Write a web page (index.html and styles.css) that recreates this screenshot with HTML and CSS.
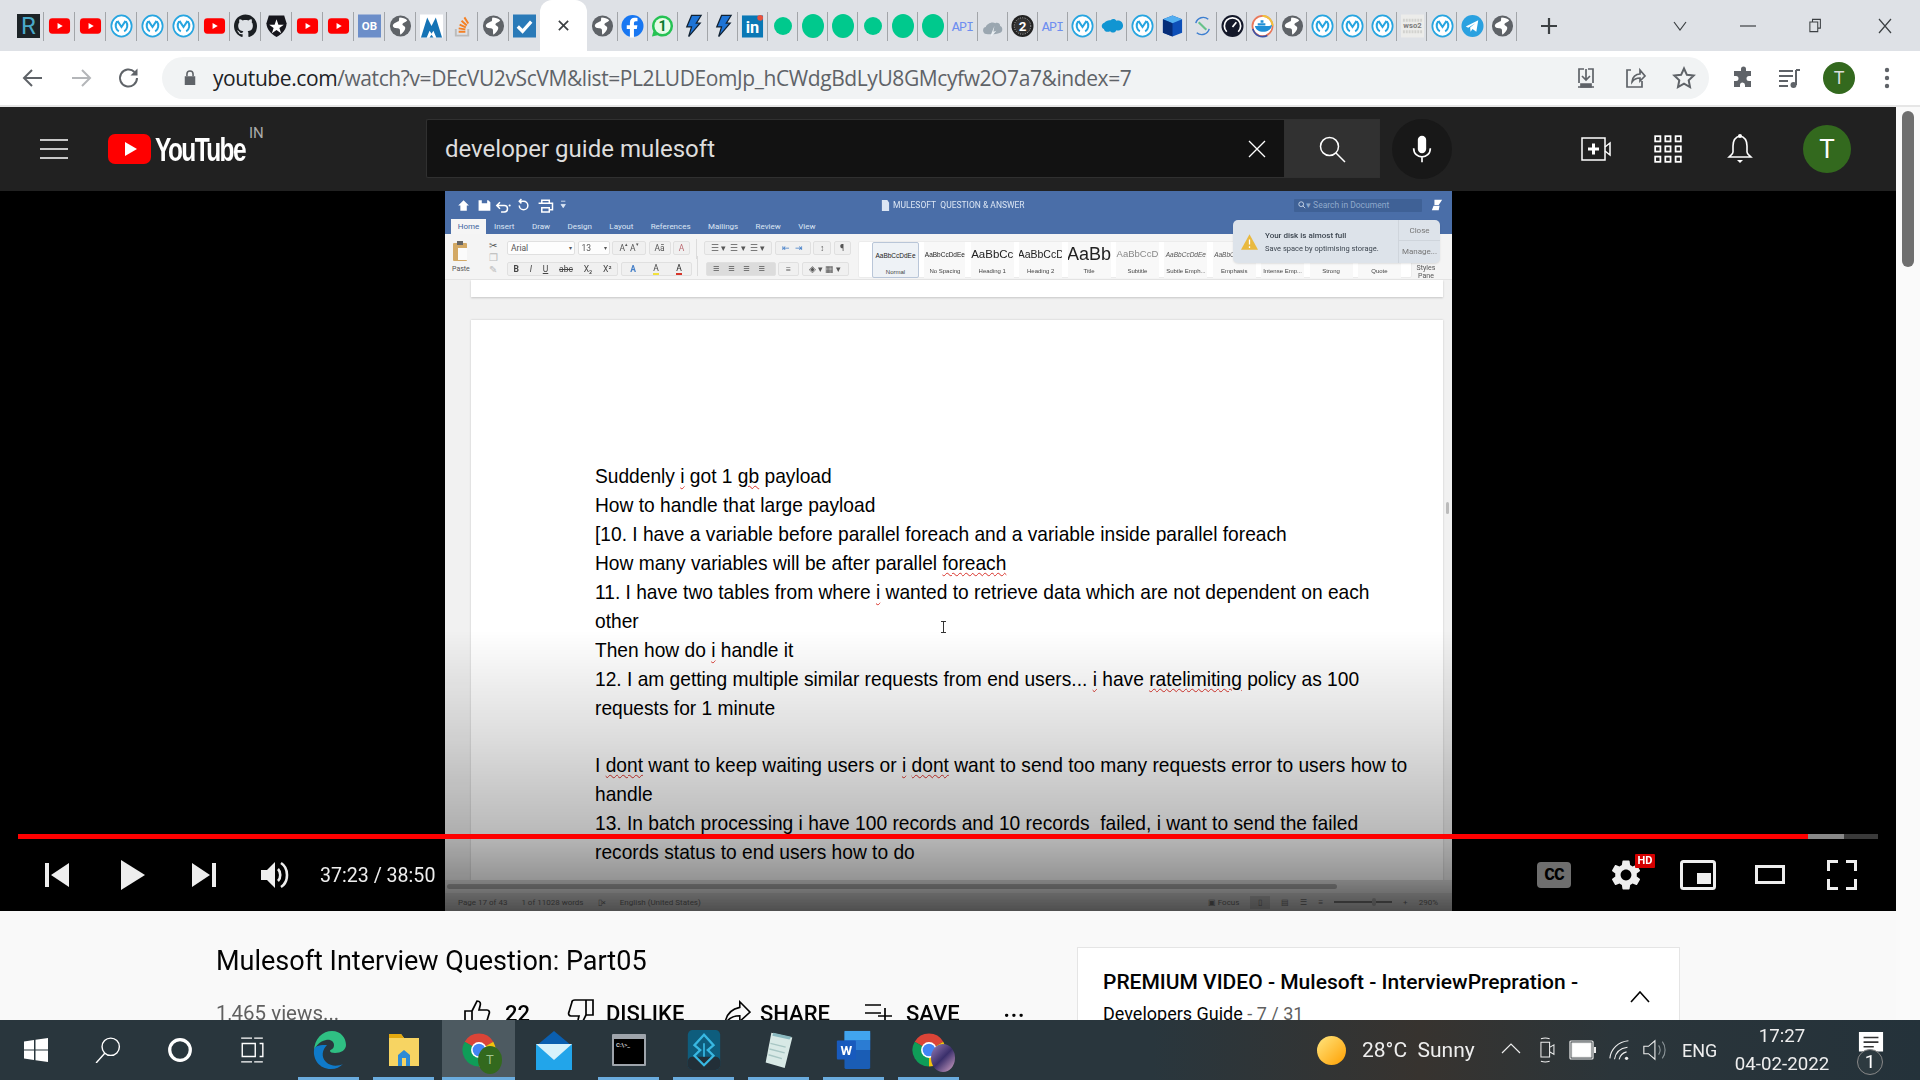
FILE: index.html
```html
<!DOCTYPE html>
<html lang="en">
<head>
<meta charset="utf-8">
<title>Mulesoft Interview Question: Part05 - YouTube</title>
<link rel="stylesheet" href="styles.css">
</head>
<body>
<svg class="defs" aria-hidden="true">
  <symbol id="yt" viewBox="0 0 24 24"><rect x="1" y="4" width="22" height="16" rx="3.5" fill="#f00"/><path d="M10 8.8l5.4 3.2-5.4 3.2z" fill="#fff"/></symbol>
  <symbol id="mule" viewBox="0 0 24 24"><ellipse cx="12" cy="12" rx="10.6" ry="11" fill="#fff" stroke="#27a5e0" stroke-width="1.8"/><path d="M7.4 7.2c-2.6 3.4-1.6 8.4 1.8 10.4M16.6 7.2c2.6 3.4 1.6 8.4-1.8 10.4M7.8 6.6l4.2 6.4 4.2-6.4" fill="none" stroke="#27a5e0" stroke-width="2.1"/></symbol>
  <symbol id="gh" viewBox="0 0 16 16"><path fill="#1b1f23" d="M8 0C3.58 0 0 3.58 0 8c0 3.54 2.29 6.53 5.47 7.59.4.07.55-.17.55-.38 0-.19-.01-.82-.01-1.49-2.01.37-2.53-.49-2.69-.94-.09-.23-.48-.94-.82-1.13-.28-.15-.68-.52-.01-.53.63-.01 1.08.58 1.23.82.72 1.21 1.87.87 2.33.66.07-.52.28-.87.51-1.07-1.78-.2-3.64-.89-3.64-3.95 0-.87.31-1.59.82-2.15-.08-.2-.36-1.02.08-2.12 0 0 .67-.21 2.2.82.64-.18 1.32-.27 2-.27.68 0 1.36.09 2 .27 1.53-1.04 2.2-.82 2.2-.82.44 1.1.16 1.92.08 2.12.51.56.82 1.27.82 2.15 0 3.07-1.87 3.75-3.65 3.95.29.25.54.73.54 1.48 0 1.07-.01 1.93-.01 2.2 0 .21.15.46.55.38A8.013 8.013 0 0016 8c0-4.42-3.58-8-8-8z"/></symbol>
  <symbol id="auth" viewBox="0 0 24 24"><path d="M4 1h16l2.500 8c0 6-4 11-10.500 14.500C6 20 1.500 15 1.500 9z" fill="#16161c"/><path d="M12 5l2 5.600h5.600l-4.600 3.400 1.800 5.600L12 16.200l-4.800 3.400 1.800-5.600-4.600-3.400H10z" fill="#fff"/></symbol>
  <symbol id="globe" viewBox="0 0 24 24"><circle cx="12" cy="12" r="11" fill="#5f6368"/><path d="M11 3c3 0 6 1 8 3-1 2-4 2-5 4 0 2 3 2 3 4s-2 5-5 7c-1-2 0-5-1-6-2-1-6 0-7-3 0-3 4-4 6-5 1-1 0-3 1-4z" fill="#fff"/></symbol>
  <symbol id="ob" viewBox="0 0 24 24"><rect width="24" height="24" fill="#6c8ec9"/><text x="12" y="16.500" text-anchor="middle" class="fav-text" font-size="12" fill="#fff">OB</text></symbol>
  <symbol id="peak" viewBox="0 0 24 24"><rect width="24" height="24" fill="#fff"/><path d="M1 24L7.500 3 12 12l4.500-9L23 24h-6l-3-7-2 3-2-3-3 7z" fill="#1573b5"/><path d="M10 24l2-3 2 3z" fill="#1573b5"/></symbol>
  <symbol id="so" viewBox="0 0 24 24"><path d="M5 15v7h13v-7" fill="none" stroke="#bbb" stroke-width="2"/><path d="M8 18h7M8 14.500l7 1M9 10.500l6.500 3M11 6.500l5.500 5M14 3l4 6.500" fill="none" stroke="#f48024" stroke-width="2"/></symbol>
  <symbol id="chk" viewBox="0 0 24 24"><rect width="24" height="24" fill="#2a7ab8"/><path d="M5 12.500l5 5 9-10" fill="none" stroke="#fff" stroke-width="3.400"/></symbol>
  <symbol id="fb" viewBox="0 0 24 24"><circle cx="12" cy="12" r="11.500" fill="#1877f2"/><path d="M13.500 24v-9h3l.6-3.800h-3.600V9c0-1 .5-2 2-2h1.700V3.600c-1-.1-2-.3-3-.3-3 0-4.900 1.800-4.900 5.100v2.800H6v3.800h3.300v9z" fill="#fff"/></symbol>
  <symbol id="wa" viewBox="0 0 24 24"><path d="M12 1a11 11 0 0 1 0 22c-2 0-3.700-.5-5.200-1.300L1 23l1.500-5.500A11 11 0 0 1 12 1z" fill="#25c253"/><circle cx="12" cy="12" r="8.400" fill="#e7fbe9"/><text x="12" y="17.500" text-anchor="middle" class="fav-text" font-size="15" fill="#0b7a2d">1</text></symbol>
  <symbol id="bolt" viewBox="0 0 24 24"><path d="M11 1h10l-5 8h4L8 23l3-10H6z" fill="#1e74d6" stroke="#123" stroke-width="1.300"/></symbol>
  <symbol id="li" viewBox="0 0 24 24"><rect x="1" y="1" width="22" height="23" fill="#0a78b5"/><text x="12" y="19" text-anchor="middle" class="fav-text" font-size="17" fill="#fff">in</text><circle cx="20" cy="3.500" r="3" fill="#e8523f"/></symbol>
  <symbol id="api" viewBox="0 0 24 24"><text x="12" y="17.500" text-anchor="middle" class="fav-api" font-size="14" fill="#6f8ff0">API</text></symbol>
  <symbol id="cld" viewBox="0 0 24 24"><path d="M4 20c-3-2-2-7 1-7 1-3 6-6 10-4 2-1 5 0 5 3 3 1 3 6 0 7-5 2-11 2-16 1z" fill="#9aa6b0"/><path d="M10 22l4-10-1 6 3-1-5 6z" fill="#e9eef2"/></symbol>
  <symbol id="two" viewBox="0 0 24 24"><circle cx="12" cy="12" r="11.500" fill="#222"/><circle cx="12" cy="12" r="8.600" fill="#333" stroke="#bbb" stroke-dasharray="1 1.500" stroke-width="1"/><text x="12" y="17" text-anchor="middle" class="fav-text" font-size="14" fill="#fff">2</text></symbol>
  <symbol id="sf" viewBox="0 0 24 24"><path d="M10 4c2-2 5-1.500 6 .5 3-1 7 1 7 5 0 4-4 6-7 5-1 3-5 3-6.500 1-3 1.500-6 0-6.500-2.500C0 12 0 7.500 3.500 6.500 5 4.500 8 3.500 10 4z" fill="#1195d2" transform="translate(0 2)"/></symbol>
  <symbol id="box" viewBox="0 0 24 24"><path d="M12 1l10 4v14l-10 4-10-4V5z" fill="#0d4fb8"/><path d="M12 1l10 4-10 4L2 5z" fill="#52aef0"/><path d="M12 9v14L2 19V5z" fill="#062d78"/></symbol>
  <symbol id="scv" viewBox="0 0 24 24"><path d="M18 5A8 8 0 0 0 5 9" fill="none" stroke="#3d7fd0" stroke-width="1.500"/><path d="M6 19A8 8 0 0 0 19 15" fill="none" stroke="#3d7fd0" stroke-width="1.500"/><path d="M8 8l8 8" stroke="#66c28a" stroke-width="2.200"/></symbol>
  <symbol id="gauge" viewBox="0 0 24 24"><circle cx="12" cy="12" r="11.500" fill="#141829"/><path d="M6 18a8.500 8.500 0 1 1 12 0" fill="none" stroke="#fff" stroke-width="1.800"/><path d="M12 13l4-5" stroke="#fff" stroke-width="1.800"/></symbol>
  <symbol id="dock" viewBox="0 0 24 24"><circle cx="12" cy="12" r="10.500" fill="#fff" stroke="#e9785b" stroke-width="1.800"/><path d="M12 1.500a10.500 10.500 0 0 1 10.500 10.500" fill="none" stroke="#f0c43c" stroke-width="1.800"/><path d="M2 15a10.500 10.500 0 0 0 15 7" fill="none" stroke="#3a52a8" stroke-width="1.800"/><path d="M4 12h15c1 0 2-1 3-1-1 5-5 7-9 7-5 0-8-2-9-6z" fill="#1f8fd6"/><path d="M7 9h8v2.500H7zM10 6h3v2.500h-3z" fill="#1f8fd6"/></symbol>
  <symbol id="wso" viewBox="0 0 24 24"><rect width="24" height="24" fill="#ececea"/><path d="M2 6h20M2 18h20" stroke="#d2d2cf" stroke-width="3" stroke-dasharray="2 1"/><text x="12" y="14.500" text-anchor="middle" class="fav-text" font-size="8" fill="#7b7b7b">wso2</text></symbol>
  <symbol id="tg" viewBox="0 0 24 24"><circle cx="12" cy="12" r="11.500" fill="#2aa1e0"/><path d="M5 12.500L18 6l-2 12-4-3-2 3-.5-4.500L15 9l-7.500 4.800z" fill="#fff"/></symbol>
  <symbol id="chrome" viewBox="0 0 24 24"><path d="M12 12L2.470 6.500A11 11 0 0 1 21.530 6.500z" fill="#db4437"/><path d="M12 12l9.530-5.500A11 11 0 0 1 12 23z" fill="#f4c20d"/><path d="M12 12v11A11 11 0 0 1 2.470 6.500z" fill="#0f9d58"/><circle cx="12" cy="12" r="5.300" fill="#fff"/><circle cx="12" cy="12" r="4.200" fill="#4285f4"/></symbol>
</svg>

<header class="tabstrip">
  <div class="tabs">
    <span class="tab"><span class="fav-r">R</span></span>
    <span class="tab"><svg class="fav"><use href="#yt"/></svg></span>
    <span class="tab"><svg class="fav"><use href="#yt"/></svg></span>
    <span class="tab"><svg class="fav"><use href="#mule"/></svg></span>
    <span class="tab"><svg class="fav"><use href="#mule"/></svg></span>
    <span class="tab"><svg class="fav"><use href="#mule"/></svg></span>
    <span class="tab"><svg class="fav"><use href="#yt"/></svg></span>
    <span class="tab"><svg class="fav"><use href="#gh"/></svg></span>
    <span class="tab"><svg class="fav"><use href="#auth"/></svg></span>
    <span class="tab"><svg class="fav"><use href="#yt"/></svg></span>
    <span class="tab"><svg class="fav"><use href="#yt"/></svg></span>
    <span class="tab"><svg class="fav"><use href="#ob"/></svg></span>
    <span class="tab"><svg class="fav"><use href="#globe"/></svg></span>
    <span class="tab"><svg class="fav"><use href="#peak"/></svg></span>
    <span class="tab"><svg class="fav"><use href="#so"/></svg></span>
    <span class="tab"><svg class="fav"><use href="#globe"/></svg></span>
    <span class="tab tab-last"><svg class="fav"><use href="#chk"/></svg></span>
  </div>
  <div class="tab-active"><svg class="tab-x" viewBox="0 0 14 14"><path d="M2 2l10 10M12 2L2 12"/></svg></div>
  <div class="tabs tabs-b">
    <span class="tab"><svg class="fav"><use href="#globe"/></svg></span>
    <span class="tab"><svg class="fav"><use href="#fb"/></svg></span>
    <span class="tab"><svg class="fav"><use href="#wa"/></svg></span>
    <span class="tab"><svg class="fav"><use href="#bolt"/></svg></span>
    <span class="tab"><svg class="fav"><use href="#bolt"/></svg></span>
    <span class="tab"><svg class="fav"><use href="#li"/></svg></span>
    <span class="tab"><b class="dot dot-s"></b></span>
    <span class="tab"><b class="dot"></b></span>
    <span class="tab"><b class="dot"></b></span>
    <span class="tab"><b class="dot dot-s"></b></span>
    <span class="tab"><b class="dot"></b></span>
    <span class="tab"><b class="dot"></b></span>
    <span class="tab"><svg class="fav"><use href="#api"/></svg></span>
    <span class="tab"><svg class="fav"><use href="#cld"/></svg></span>
    <span class="tab"><svg class="fav"><use href="#two"/></svg></span>
    <span class="tab"><svg class="fav"><use href="#api"/></svg></span>
    <span class="tab"><svg class="fav"><use href="#mule"/></svg></span>
    <span class="tab"><svg class="fav"><use href="#sf"/></svg></span>
    <span class="tab"><svg class="fav"><use href="#mule"/></svg></span>
    <span class="tab"><svg class="fav"><use href="#box"/></svg></span>
    <span class="tab"><svg class="fav"><use href="#scv"/></svg></span>
    <span class="tab"><svg class="fav"><use href="#gauge"/></svg></span>
    <span class="tab"><svg class="fav"><use href="#dock"/></svg></span>
    <span class="tab"><svg class="fav"><use href="#globe"/></svg></span>
    <span class="tab"><svg class="fav"><use href="#mule"/></svg></span>
    <span class="tab"><svg class="fav"><use href="#mule"/></svg></span>
    <span class="tab"><svg class="fav"><use href="#mule"/></svg></span>
    <span class="tab"><svg class="fav"><use href="#wso"/></svg></span>
    <span class="tab"><svg class="fav"><use href="#mule"/></svg></span>
    <span class="tab"><svg class="fav"><use href="#tg"/></svg></span>
    <span class="tab"><svg class="fav"><use href="#globe"/></svg></span>
  </div>
  <svg class="new-tab" viewBox="0 0 18 18"><path d="M9 1v16M1 9h16"/></svg>
  <div class="win-ctrl">
    <svg class="wc wc-chev" viewBox="0 0 16 12"><path d="M2 2l6 8 6-8"/></svg>
    <svg class="wc wc-min" viewBox="0 0 16 12"><path d="M0 6h16"/></svg>
    <svg class="wc wc-max" viewBox="0 0 16 16"><path d="M4 4V1h9v10h-3M1 4h9v11H1z"/></svg>
    <svg class="wc wc-x" viewBox="0 0 16 16"><path d="M2 1l12 14M14 1L2 15"/></svg>
  </div>
</header>

<nav class="addrbar">
  <svg class="nav-ic ic-back" viewBox="0 0 24 24"><path d="M21 12H4M11 4l-8 8 8 8"/></svg>
  <svg class="nav-ic ic-fwd" viewBox="0 0 24 24"><path d="M3 12h17M13 4l8 8-8 8"/></svg>
  <svg class="nav-ic ic-rel" viewBox="0 0 24 24"><path d="M20 12a8.500 8.500 0 1 1-2.500-6"/><path class="solid" d="M20.500 2.500v7h-7z"/></svg>
  <div class="omni">
    <svg class="lock" viewBox="0 0 16 20"><path d="M2 8h12v10H2z" fill="#5f6368"/><path d="M4.500 8V5.500a3.500 3.500 0 0 1 7 0V8" fill="none" stroke="#5f6368" stroke-width="1.800"/></svg>
    <span class="url"><span class="url-host">youtube.com</span>/watch?v=DEcVU2vScVM&amp;list=PL2LUDEomJp_hCWdgBdLyU8GMcyfw2O7a7&amp;index=7</span>
    <span class="omni-icons">
      <svg class="om-ic" viewBox="0 0 24 24"><path d="M5 17V3h5M19 17V3h-5M12 3v11M8 10l4 4 4-4M4 21h16" /><path d="M7 18h10v3H7z" fill="#5f6368"/></svg>
      <svg class="om-ic" viewBox="0 0 24 24"><path d="M8 4H4v17h15v-6M9 16c0-5 4-8 8-8V4l5 6-5 5v-3c-3 0-6 1-8 4z"/></svg>
      <svg class="om-ic" viewBox="0 0 24 24"><path d="M12 2.500l2.900 6.300 6.800.8-5 4.700 1.300 6.800L12 17.700 6 21.100l1.300-6.800-5-4.700 6.800-.8z" stroke-width="2"/></svg>
    </span>
  </div>
  <svg class="tb-ic tb-puzzle" viewBox="0 0 24 24"><path d="M10 3a2.500 2.500 0 0 1 5 0v2h5v5h-2a2.500 2.500 0 0 0 0 5h2v6h-6v-2a2.500 2.500 0 0 0-5 0v2H3v-6h2a2.500 2.500 0 0 0 0-5H3V5h7z" fill="#5f6368"/></svg>
  <svg class="tb-ic tb-queue" viewBox="0 0 24 24"><path d="M2 5h14M2 10h14M2 15h9M2 20h9M19 4v15" stroke="#5f6368" stroke-width="2" fill="none"/><circle cx="16.500" cy="19" r="3" fill="#5f6368"/><path d="M19 4h4" stroke="#5f6368" stroke-width="2"/></svg>
  <span class="tb-avatar">T</span>
  <svg class="tb-ic tb-dots" viewBox="0 0 6 24"><circle cx="3" cy="4" r="2.200" fill="#5f6368"/><circle cx="3" cy="12" r="2.200" fill="#5f6368"/><circle cx="3" cy="20" r="2.200" fill="#5f6368"/></svg>
</nav>

<div class="page">
  <main class="main">
    <div class="yt-header">
      <svg class="burger" viewBox="0 0 28 20"><path d="M0 1h28M0 10h28M0 19h28"/></svg>
      <div class="logo">
        <svg class="logo-play" viewBox="0 0 43 30"><rect width="43" height="30" rx="7" fill="#f00"/><path d="M17 8l12 7-12 7z" fill="#fff"/></svg>
        <span class="logo-word">YouTube</span>
        <span class="logo-in">IN</span>
      </div>
      <div class="search">
        <span class="search-text">developer guide mulesoft</span>
        <svg class="search-x" viewBox="0 0 18 18"><path d="M1 1l16 16M17 1L1 17"/></svg>
      </div>
      <div class="search-btn"><svg viewBox="0 0 28 28"><circle cx="11.500" cy="11.500" r="9"/><path d="M18 18l9 9"/></svg></div>
      <div class="mic"><svg viewBox="0 0 24 34"><rect x="7" y="1" width="10" height="21" rx="5" fill="#fff"/><path d="M2 16c0 14 20 14 20 0M12 26v7" fill="none" stroke="#fff" stroke-width="2"/></svg></div>
      <div class="yt-right">
        <span class="yt-slot"><svg class="yt-ic" viewBox="0 0 30 28"><rect x="1" y="3" width="23" height="22" fill="none" stroke="#fff" stroke-width="1.500"/><path d="M12.500 8.500v11M7 14h11" stroke="#fff" stroke-width="3"/><path d="M24 12l5-4v12l-5-4" fill="none" stroke="#fff" stroke-width="1.500"/></svg></span>
        <span class="yt-slot"><svg class="yt-ic" viewBox="0 0 24 24"><g fill="none" stroke="#fff" stroke-width="1.500"><rect x="1" y="1" width="4.500" height="4.500"/><rect x="9.700" y="1" width="4.500" height="4.500"/><rect x="18.500" y="1" width="4.500" height="4.500"/><rect x="1" y="9.700" width="4.500" height="4.500"/><rect x="9.700" y="9.700" width="4.500" height="4.500"/><rect x="18.500" y="9.700" width="4.500" height="4.500"/><rect x="1" y="18.500" width="4.500" height="4.500"/><rect x="9.700" y="18.500" width="4.500" height="4.500"/><rect x="18.500" y="18.500" width="4.500" height="4.500"/></g></svg></span>
        <span class="yt-slot"><svg class="yt-ic yt-bell" viewBox="0 0 24 32"><path d="M12 3c-5 1-7 5-7 10v6c0 2-2 3-4 5h22c-2-2-4-3-4-5v-6c0-5-2-9-7-10z" fill="none" stroke="#fff" stroke-width="1.600"/><circle cx="12" cy="3" r="2" fill="#fff"/><path d="M9 27h6l-3 3z" fill="#fff"/></svg></span>
        <span class="yt-avatar">T</span>
      </div>
    </div>

    <section class="video">
      <div class="word">
        <div class="w-title">
          <svg class="w-q" viewBox="0 0 110 14"><path d="M2 7l5-5 5 5h-2v5H4V7zM21 2h9l2 2v8H21zM24 2v3h5V2zM24 8h6v4h-6z" fill="#fff"/><path d="M41 4l-3 3 3 3M38 7h7a3 3 0 0 1 0 6h-3M59 7a4 4 0 1 0 4-4h-4M61 1l-2 2 2 2M80 5v-3h7v3M77 5h13v6h-3M80 9h7v4h-7z" fill="none" stroke="#fff" stroke-width="1.400"/><circle cx="50" cy="7" r="1" fill="#fff"/><path d="M98 6h4l-2 3zM98 3h4" stroke="#dce6f4" fill="#dce6f4" stroke-width=".8"/></svg>
          <span class="w-doc"><svg viewBox="0 0 10 12"><path d="M1 0h6l2 3v9H1z" fill="#dce6f4"/></svg>MULESOFT&nbsp; QUESTION &amp; ANSWER</span>
          <span class="w-search"><svg viewBox="0 0 10 10"><circle cx="4" cy="4" r="3" fill="none" stroke="#dce6f4"/><path d="M6 6l3 3" stroke="#dce6f4"/></svg>▾ Search in Document</span>
          <svg class="w-user" viewBox="0 0 14 14"><path d="M4 1h9L9 7H4zM1 13l2-5h7l-1 5z" fill="#fff"/></svg>
        </div>
        <div class="w-tabs">
          <span class="w-tab w-tab-on">Home</span><span class="w-tab">Insert</span><span class="w-tab">Draw</span><span class="w-tab">Design</span><span class="w-tab">Layout</span><span class="w-tab">References</span><span class="w-tab">Mailings</span><span class="w-tab">Review</span><span class="w-tab">View</span>
        </div>
        <div class="w-ribbon">
          <div class="paste">
            <div class="paste-main"><svg viewBox="0 0 16 22"><rect x="1" y="3" width="14" height="18" rx="1" fill="#d3a965"/><rect x="5" y="1" width="6" height="4" fill="#666"/><rect x="6" y="8" width="9" height="12" fill="#fbfbfb"/></svg><span>Paste</span></div>
            <div class="paste-side"><span class="ps-ic">✂</span><span class="ps-ic ps-dim">❐</span><span class="ps-ic ps-dim">✎</span></div>
          </div>
          <div class="rows">
            <div class="row">
              <span class="rb rb-font">Arial<i>▾</i></span>
              <span class="rb rb-size">13<i>▾</i></span>
              <span class="rb rb-g w34">A<sup>▴</sup>&nbsp;A<sup>▾</sup></span>
              <span class="rb rb-g w22">Aā</span>
              <span class="rb rb-g w17 clr">A</span>
              <span class="rsep"></span>
              <span class="rb rb-g w68">☰ ▾&nbsp; ☰ ▾&nbsp; ☰ ▾</span>
              <span class="rb rb-g w36 blue">⇤&nbsp; ⇥</span>
              <span class="rb rb-g w18">↕</span>
              <span class="rb rb-g w17">¶</span>
            </div>
            <div class="row">
              <span class="rb rb-g w111 fmt"><b>B</b><em>I</em><u>U</u><s>abc</s><span>X₂</span><span>X²</span></span>
              <span class="rb rb-g w71 fmt"><span class="fx">A</span><span class="hl">A</span><span class="rd">A</span></span>
              <span class="rsep"></span>
              <span class="rb rb-g w70 alignb">≡ ≡ ≡ ≡</span>
              <span class="rb rb-g w21">≡</span>
              <span class="rb rb-g w47">◈ ▾ ▦ ▾</span>
            </div>
          </div>
          <div class="gallery">
            <span class="sty sty-on"><span class="sm">AaBbCcDdEe</span><em>Normal</em></span>
            <span class="sty w41"><span class="sm">AaBbCcDdEe</span><em>No Spacing</em></span>
            <span class="sty"><span class="h1s">AaBbCc</span><em>Heading 1</em></span>
            <span class="sty"><span class="h2s">AaBbCcD</span><em>Heading 2</em></span>
            <span class="sty"><span class="tts">AaBb</span><em>Title</em></span>
            <span class="sty"><span class="sbs">AaBbCcD</span><em>Subtitle</em></span>
            <span class="sty"><span class="sm it">AaBbCcDdEe</span><em>Subtle Emph...</em></span>
            <span class="sty"><span class="sm it">AaBbCcDdEe</span><em>Emphasis</em></span>
            <span class="sty"><span class="sm it">AaBbCcDdEe</span><em>Intense Emp...</em></span>
            <span class="sty"><span class="sm">AaBbCcDdEe</span><em>Strong</em></span>
            <span class="sty"><span class="sm it">AaBbCcDdEe</span><em>Quote</em></span>
            <span class="pane">Styles<br>Pane</span>
          </div>
        </div>
        <div class="notice">
          <svg viewBox="0 0 20 18"><path d="M10 0l10 18H0z" fill="#e9b93f"/><path d="M10 6v6M10 14v2" stroke="#fff" stroke-width="1.500"/></svg>
          <div class="notice-txt"><b>Your disk is almost full</b><span>Save space by optimising storage.</span></div>
          <div class="notice-act"><span>Close</span><span>Manage...</span></div>
        </div>
        <div class="w-doc-area">
          <div class="page-prev"></div>
          <div class="page-cur">
            <p>Suddenly <span class="sp">i</span> got 1 <span class="sp">gb</span> payload</p>
            <p>How to handle that large payload</p>
            <p>[10. I have a variable before parallel foreach and a variable inside parallel foreach</p>
            <p>How many variables will be after parallel <span class="sp">foreach</span></p>
            <p>11. I have two tables from where <span class="sp">i</span> wanted to retrieve data which are not dependent on each</p>
            <p>other</p>
            <p>Then how do <span class="sp">i</span> handle it</p>
            <p>12. I am getting multiple similar requests from end users... <span class="sp">i</span> have <span class="sp">ratelimiting</span> policy as 100</p>
            <p>requests for 1 minute</p>
            <p>&nbsp;</p>
            <p>I <span class="sp">dont</span> want to keep waiting users or <span class="sp">i</span> <span class="sp">dont</span> want to send too many requests error to users how to</p>
            <p>handle</p>
            <p>13. In batch processing i have 100 records and 10 records&nbsp; failed, i want to send the failed</p>
            <p>records status to end users how to do</p>
            <svg class="ibeam" viewBox="0 0 7 12"><path d="M1 .5h5M3.500.5v11M1 11.500h5" stroke="#333" fill="none"/></svg>
          </div>
          <span class="w-vthumb"></span>
        </div>
        <div class="w-hscroll"><span></span></div>
        <div class="w-status">
          <span>Page 17 of 43</span><span>1 of 11028 words</span><span class="st-book">▯×</span><span>English (United States)</span>
          <span class="st-right"><span>▣ Focus</span><span class="st-view">▯</span><span>▤</span><span>☰</span><span>≡</span><span class="st-zoom"><i></i></span><span>+</span><span>290%</span></span>
        </div>
      </div>
      <div class="scrim"></div>
      <div class="progress"><span class="p-buf"></span><span class="p-play"></span></div>
      <div class="controls">
        <span class="c-slot s72"><svg class="c-ic" viewBox="0 0 24 24"><path d="M0 0h4v24H0zM24 0v24L6 12z"/></svg></span>
        <span class="c-slot s80"><svg class="c-play" viewBox="0 0 24 30"><path d="M0 0l24 15L0 30z"/></svg></span>
        <span class="c-slot s62"><svg class="c-ic" viewBox="0 0 24 24"><path d="M20 0h4v24h-4zM0 0l18 12L0 24z"/></svg></span>
        <span class="c-slot s80"><svg class="c-vol" viewBox="0 0 28 28"><path d="M0 9h6l8-8v26l-8-8H0z"/><path d="M17 8c3 3 3 9 0 12M20 2c8 5 8 19 0 24" fill="none" stroke="#eee" stroke-width="2.600"/></svg></span>
        <span class="c-time">37:23 / 38:50</span>
        <span class="c-right">
          <span class="c-slot s72"><span class="cc">CC</span></span>
          <span class="c-slot s72 c-set"><svg class="c-gear" viewBox="0 0 24 24"><path d="M19.14 12.94c.04-.3.06-.61.06-.94 0-.32-.02-.64-.07-.94l2.03-1.58a.49.49 0 0 0 .12-.61l-1.92-3.32a.488.488 0 0 0-.59-.22l-2.39.96c-.5-.38-1.03-.7-1.62-.94l-.36-2.54a.484.484 0 0 0-.48-.41h-3.84c-.24 0-.43.17-.47.41l-.36 2.54c-.59.24-1.13.57-1.62.94l-2.39-.96c-.22-.08-.47 0-.59.22L2.74 8.87c-.12.21-.08.47.12.61l2.03 1.58c-.05.3-.07.62-.07.94s.02.64.07.94l-2.03 1.58a.49.49 0 0 0-.12.61l1.92 3.32c.12.22.37.29.59.22l2.39-.96c.5.38 1.03.7 1.62.94l.36 2.54c.05.24.24.41.48.41h3.84c.24 0 .44-.17.47-.41l.36-2.54c.59-.24 1.13-.56 1.62-.94l2.39.96c.22.08.47 0 .59-.22l1.92-3.32c.12-.22.07-.47-.12-.61l-2.01-1.58zM12 15.600c-1.980 0-3.600-1.620-3.600-3.600s1.620-3.600 3.600-3.600 3.600 1.620 3.600 3.600-1.620 3.600-3.600 3.600z"/></svg><span class="hd">HD</span></span>
          <span class="c-slot s72"><svg class="c-ic2" viewBox="0 0 36 30"><rect x="1.500" y="1.500" width="33" height="27" rx="2" fill="none" stroke="#eee" stroke-width="3"/><rect x="17" y="13" width="14" height="11"/></svg></span>
          <span class="c-slot s72"><svg class="c-ic2 c-th" viewBox="0 0 30 20"><rect x="1.500" y="1.500" width="27" height="16" fill="none" stroke="#eee" stroke-width="3"/></svg></span>
          <span class="c-slot s72"><svg class="c-ic2 c-fs" viewBox="0 0 30 30"><path d="M1.500 11V1.500H11M19 1.500h9.500V11M28.500 19v9.500H19M11 28.500H1.500V19" fill="none" stroke="#eee" stroke-width="3"/></svg></span>
        </span>
      </div>
    </section>

    <section class="below">
      <div class="info">
        <h1 class="title">Mulesoft Interview Question: Part05</h1>
        <div class="meta">
          <span class="views">1,465 views...</span>
          <span class="acts">
            <span class="act a-like"><svg viewBox="0 0 28 28"><path d="M9 12l5-10c3 0 4 2 3 5l-1 4h8c2 0 3 2 2 4l-3 10c0 1-1 2-3 2H9zM2 12h7v15H2z"/></svg>22</span>
            <span class="act a-dis"><svg viewBox="0 0 28 28"><path d="M19 16l-5 10c-3 0-4-2-3-5l1-4H4c-2 0-3-2-2-4l3-10c0-1 1-2 3-2h11zM26 16h-7V1h7z"/></svg>DISLIKE</span>
            <span class="act a-share"><svg viewBox="0 0 30 28"><path d="M18 2l11 11-11 10v-6c-7 0-12 2-16 9 1-9 6-16 16-18z"/></svg>SHARE</span>
            <span class="act a-save"><svg viewBox="0 0 28 22"><path d="M1 3h16M1 11h16M1 19h10M21 6v15M14 14h14"/></svg>SAVE</span>
            <span class="a-more">•••</span>
          </span>
        </div>
      </div>
      <aside class="playlist">
        <div class="pl-txt">
          <div class="pl-title">PREMIUM VIDEO - Mulesoft - InterviewPrepration -</div>
          <div class="pl-sub">Developers Guide <span>- 7 / 31</span></div>
        </div>
        <svg class="pl-chev" viewBox="0 0 20 12"><path d="M1 11l9-10 9 10"/></svg>
      </aside>
    </section>
  </main>
  <aside class="vscroll"><span class="vthumb"></span></aside>
</div>

<footer class="taskbar">
  <div class="tb-sys">
    <span class="ts"><svg class="t-win" viewBox="0 0 24 24"><path d="M0 3.500l10-1.500v9.500H0zM11.500 1.800L24 0v11.500H11.500zM0 12.500h10V22L0 20.500zM11.500 12.500H24V24l-12.500-1.800z" fill="#fff"/></svg></span>
    <span class="ts"><svg class="t-ln" viewBox="0 0 24 24"><circle cx="14.500" cy="9" r="8"/><path d="M9 15l-8 9"/></svg></span>
    <span class="ts"><svg class="t-ln" viewBox="0 0 24 24"><circle cx="12" cy="12" r="9.500" stroke-width="3"/></svg></span>
    <span class="ts"><svg class="t-ln" viewBox="0 0 24 24"><path d="M2 1h10M14 1h8M2 23h10M14 23h8M3 6h12v12H3zM19 6h3v12h-3"/></svg></span>
  </div>
  <div class="tb-apps">
    <span class="ta"><svg class="t-app" viewBox="0 0 36 40"><path d="M3 22C3 8 12 1 21 1c9 0 14 7 14 14 0 5-5 8-11 8-3 0-5-1-5-2 0-2 4-1 4-6 0-3-3-6-8-5-7 1-12 8-12 12z" fill="#2fbf83"/><path d="M3 20c-1 9 5 19 17 19 5 0 9-2 12-5-4 2-12 3-17-2-5-5-4-12 1-17-6 0-12 0-13 5z" fill="#0f7ac9"/></svg><i class="run"></i></span>
    <span class="ta"><svg class="t-app" viewBox="0 0 36 40"><path d="M3 4h12l3 4h15v28H3z" fill="#f7d462"/><path d="M3 4h12l3 4H3z" fill="#e3a90f"/><path d="M12 36V25l6-5 6 5v11h-4v-8h-4v8z" fill="#2e8bd6"/></svg><i class="run"></i></span>
    <span class="ta ta-on"><svg class="t-app" viewBox="0 0 24 24"><use href="#chrome"/></svg><span class="t-badge">T</span><i class="run run-on"></i></span>
    <span class="ta"><svg class="t-app" viewBox="0 0 36 40"><path d="M18 1L0 16h36z" fill="#0a5fb0"/><path d="M0 14h36v26H0z" fill="#22a5ea"/><path d="M0 14h36L18 30z" fill="#d8f2fb"/></svg></span>
    <span class="ta"><svg class="t-app" viewBox="0 0 36 40"><rect x="1" y="4" width="34" height="32" rx="1" fill="#9ea4ab"/><rect x="3" y="9" width="30" height="25" fill="#000"/><text x="5" y="17" font-size="6" fill="#ccc" class="fav-text">C:\&gt;_</text></svg><i class="run"></i></span>
    <span class="ta"><svg class="t-app" viewBox="0 0 36 42"><rect x="1" y="0" width="34" height="42" rx="5" fill="#0e5d7d"/><rect x="1" y="28" width="34" height="14" rx="5" fill="#222f38"/><path d="M18 5l-10 11 6 5-6 6 10 10 10-10-6-6 6-5z" fill="none" stroke="#38b8e2" stroke-width="2.400"/><path d="M18 14v14" stroke="#38b8e2" stroke-width="1.800"/></svg><i class="run"></i></span>
    <span class="ta"><svg class="t-app" viewBox="0 0 36 42"><path d="M10 3l22 5-8 32-20-6z" fill="#d8e9e6"/><path d="M12 3l19 4-2 3-18-4z" fill="#8ab9c0"/><path d="M9 14l16 4M8 20l16 4M7 26l14 4" stroke="#a7c6c4" stroke-width="1.500"/></svg><i class="run"></i></span>
    <span class="ta"><svg class="t-app" viewBox="0 0 36 42"><rect x="8" y="1" width="27" height="40" rx="2" fill="#1a5db5"/><rect x="8" y="1" width="27" height="10" fill="#41a5ee"/><rect x="8" y="11" width="27" height="10" fill="#2b7cd3"/><rect x="0" y="11" width="20" height="20" rx="1" fill="#185abd"/><text x="10" y="26" text-anchor="middle" font-size="14" class="fav-text" fill="#fff">W</text></svg><i class="run"></i></span>
    <span class="ta"><svg class="t-app" viewBox="0 0 24 24"><use href="#chrome"/></svg><span class="t-badge t-badge-pic"></span><i class="run"></i></span>
  </div>
  <div class="tray">
    <span class="sun"></span>
    <span class="weather">28°C&nbsp; Sunny</span>
    <svg class="tr tr-up" viewBox="0 0 20 12"><path d="M1 11l9-9 9 9"/></svg>
    <svg class="tr tr-meet" viewBox="0 0 22 30"><path d="M4 6h10v17H4zM14 12l5-3v11l-5-3"/><path d="M4 2c3-1 7-1 10 0M4 28c3 1 7 1 10 0"/></svg>
    <svg class="tr tr-bat" viewBox="0 0 28 20"><rect x="1" y="1" width="23" height="18" rx="1"/><rect x="3" y="3" width="19" height="14" fill="#fff"/><path d="M26 7v6" stroke-width="2"/></svg>
    <svg class="tr tr-wifi" viewBox="0 0 28 24"><path d="M2 21C3 11 11 3 22 2M7 22c1-7 6-12 14-13M12 22c1-4 4-7 8-8"/><circle cx="20" cy="21" r="1.800" fill="#eee" stroke="none"/></svg>
    <svg class="tr tr-vol" viewBox="0 0 26 26"><path d="M2 9h5l7-6v20l-7-6H2z"/><path d="M18 8c2 3 2 7 0 10M22 4c4 5 4 13 0 18" stroke="#8b9498"/></svg>
    <span class="eng">ENG</span>
    <span class="clock"><span>17:27</span><span>04-02-2022</span></span>
    <span class="note"><svg viewBox="0 0 28 28"><path d="M1 1h26v21H14l-6 6v-6H1z" fill="#fff"/><path d="M6 7h16M6 12h16M6 17h11" stroke="#333" stroke-width="1.700"/></svg><b class="note-n">1</b></span>
  </div>
</footer>
</body>
</html>
```

FILE: styles.css
```css
* { box-sizing: border-box; margin: 0; padding: 0; }
html, body { width: 1920px; height: 1080px; overflow: hidden; }
body { font-family: Roboto, "Liberation Sans", sans-serif; background: #f9f9f9; color: #030303; display: flex; flex-direction: column; }
.defs { position: absolute; width: 0; height: 0; }
.fav-text { font-family: Roboto, "Liberation Sans", sans-serif; font-weight: 700; }
.fav-api { font-family: "Liberation Mono", monospace; font-weight: 400; letter-spacing: -1px; }

/* tab strip */
.tabstrip { height: 51px; background: #dee1e6; display: flex; align-items: stretch; flex: none; }
.tabs { display: flex; padding-left: 13px; }
.tabs-b { padding-left: 1px; }
.tab { width: 31px; height: 51px; display: flex; align-items: center; justify-content: center; position: relative; }
.tabs-b .tab { width: 29.97px; }
.tab::after { content: ""; position: absolute; right: 0; top: 12px; height: 29px; width: 1px; background: #a2a5a9; }
.tab-last::after { display: none; }
.fav { width: 23px; height: 24px; }
.fav-r { width: 23px; height: 24px; background: #1c2327; color: #4aa9c9; font: 400 24px/24px Roboto, sans-serif; text-align: center; }
.dot { width: 22px; height: 24px; border-radius: 50%; background: #00c98d; display: block; }
.dot-s { width: 18px; height: 18px; }
.tab-active { width: 47px; height: 51px; background: #fff; border-radius: 12px 12px 0 0; display: flex; align-items: center; justify-content: center; }
.tab-x { width: 13px; height: 13px; fill: none; stroke: #3c4043; stroke-width: 1.800; }
.new-tab { width: 18px; height: 18px; margin: 17px 0 0 23px; fill: none; stroke: #3c4043; stroke-width: 2.200; }
.win-ctrl { margin-left: auto; display: flex; align-items: center; height: 51px; padding-right: 27px; }
.wc { fill: none; stroke: #3c4043; stroke-width: 1.200; }
.wc-chev { width: 16px; height: 12px; margin-right: 52px; }
.wc-min { width: 16px; height: 12px; margin-right: 53px; }
.wc-max { width: 14px; height: 17px; margin-right: 54px; }
.wc-x { width: 16px; height: 18px; }

/* address bar */
.addrbar { height: 54px; background: #fff; display: flex; align-items: center; flex: none; padding-left: 21px; }
.nav-ic { width: 24px; height: 24px; fill: none; stroke: #5f6368; stroke-width: 2; }
.ic-fwd { margin-left: 24px; stroke: #b4b6b9; }
.ic-rel { margin-left: 24px; }
.ic-rel .solid { fill: #5f6368; stroke: none; }
.omni { width: 1547px; height: 42px; margin-left: 21px; background: #f1f3f4; border-radius: 21px; display: flex; align-items: center; padding-left: 21px; }
.lock { width: 14px; height: 18px; flex: none; }
.url { margin-left: 16px; font: 400 21px/42px "Open Sans", sans-serif; color: #5f6368; white-space: nowrap; letter-spacing: -.41px; }
.url-host { color: #202124; }
.omni-icons { margin-left: auto; display: flex; padding-right: 13px; }
.om-ic { width: 24px; height: 24px; fill: none; stroke: #5f6368; stroke-width: 1.700; margin-left: 25px; }
.tb-ic { flex: none; }
.tb-puzzle { width: 24px; height: 24px; margin-left: 22px; }
.tb-queue { width: 24px; height: 24px; margin-left: 22px; }
.tb-avatar { width: 32px; height: 32px; margin-left: 22px; border-radius: 50%; background: #33691e; color: #ddd; font: 400 18px/32px Roboto, sans-serif; text-align: center; flex: none; }
.tb-dots { width: 6px; height: 24px; margin-left: 29px; }

/* page */
.page { flex: 1; min-height: 0; display: flex; border-top: 2px solid #e6e6e6; }
.main { width: 1896px; display: flex; flex-direction: column; overflow: hidden; }
.vscroll { width: 24px; background: #fafafa; padding: 4px 0 0 6px; }
.vthumb { display: block; width: 12px; height: 156px; background: #6f6f6f; border-radius: 6px; }

/* YT header */
.yt-header { height: 84px; flex: none; background: #212121; display: flex; align-items: center; padding: 0 18px 0 40px; }
.burger { width: 28px; height: 20px; flex: none; fill: none; stroke: #fff; stroke-width: 1.600; }
.logo { width: 358px; padding-left: 40px; flex: none; display: flex; align-items: center; height: 40px; }
.logo-play { width: 43px; height: 30px; flex: none; }
.logo-word { display: inline-block; margin-left: 4px; font: 700 34px/40px "Liberation Sans", sans-serif; color: #fff; transform: scaleX(.72); transform-origin: left; letter-spacing: -2.200px; width: 88px; }
.logo-in { font-size: 15px; color: #aaa; align-self: flex-start; margin-left: 6px; line-height: 15px; margin-top: -3px; }
.search { width: 858px; height: 59px; margin-top: -1px; background: #121212; border: 1px solid #303030; border-right: 0; display: flex; align-items: center; padding: 0 18px; flex: none; border-radius: 2px 0 0 2px; }
.search-text { font-size: 24px; color: #ddd; }
.search-x { width: 18px; height: 18px; margin-left: auto; margin-right: 0; fill: none; stroke: #fff; stroke-width: 1.300; }
.search-btn { width: 96px; height: 59px; margin-top: -1px; background: #313131; border: 1px solid #303030; display: flex; align-items: center; justify-content: center; flex: none; }
.search-btn svg { width: 28px; height: 28px; fill: none; stroke: #fff; stroke-width: 1.500; }
.mic { width: 60px; height: 60px; margin-left: 12px; border-radius: 50%; background: #181818; display: flex; align-items: center; justify-content: center; flex: none; }
.mic svg { width: 20px; height: 30px; }
.yt-right { margin-left: auto; display: flex; align-items: center; }
.yt-slot { width: 72px; display: flex; justify-content: center; }
.yt-ic { width: 30px; height: 28px; }
.yt-bell { height: 32px; }
.yt-avatar { width: 48px; height: 48px; margin: 0 27px; border-radius: 50%; background: #33691e; color: #fff; font-size: 26px; line-height: 48px; text-align: center; }

/* video */
.video { height: 720px; flex: none; background: #000; position: relative; padding-left: 445px; overflow: hidden; }
.word { width: 1007px; height: 720px; background: #f3f3f3; display: flex; flex-direction: column; position: relative; }
.w-title { height: 28px; flex: none; background: #4a6ea8; display: flex; align-items: center; padding-left: 11px; position: relative; color: #dce6f4; font-size: 9px; }
.w-q { width: 118px; height: 15px; flex: none; }
.w-doc { margin-left: 307px; display: flex; align-items: center; font-size: 8.500px; white-space: nowrap; filter: blur(.2px); }
.w-doc svg { width: 9px; height: 11px; margin-right: 3px; }
.w-search { margin-left: auto; width: 128px; height: 13px; background: #3f6196; display: flex; align-items: center; padding-left: 4px; font-size: 8.500px; color: #8fa9cc; white-space: nowrap; border-radius: 1px; }
.w-search svg { width: 8px; height: 8px; }
.w-user { width: 12px; height: 12px; margin: 0 9px 0 9px; }
.w-tabs { height: 15px; flex: none; background: #4a6ea8; display: flex; padding-left: 6px; color: #dce6f4; font-size: 8px; line-height: 15px; }
.w-tab { padding: 0 5px; margin-right: 7.400px; }
.w-tab-on { background: #f5f5f5; color: #3f65a0; width: 35px; padding: 0; text-align: center; margin-right: 3px; }
.w-ribbon { height: 46px; flex: none; background: #f4f4f4; border-bottom: 1px solid #e3e3e3; display: flex; color: #555; }
.paste { width: 62px; display: flex; padding: 6px 0 0 7px; flex: none; font-size: 7px; }
.paste-main { width: 30px; display: flex; flex-direction: column; gap: 3px; }
.paste-main svg { width: 16px; height: 22px; }
.paste-side { width: 14px; display: flex; flex-direction: column; align-items: center; font-size: 10px; line-height: 12px; margin-left: 4px; }
.ps-dim { color: #bbb; }
.rows { width: 346px; padding-top: 7px; display: flex; flex-direction: column; gap: 7px; flex: none; filter: blur(.3px); }
.row { display: flex; height: 14px; gap: 2.500px; align-items: stretch; }
.rb { background: #fdfdfd; border: 1px solid #e0e0e0; border-radius: 2px; font-size: 8.500px; line-height: 12px; display: flex; justify-content: center; white-space: nowrap; overflow: hidden; }
.rb i { font-style: normal; font-size: 6px; margin-left: auto; padding-right: 2px; }
.rb-font { width: 68px; justify-content: flex-start; padding-left: 3px; }
.rb-size { width: 32px; justify-content: flex-start; padding-left: 3px; }
.rb-g { background: #f0f0f0; }
.rb sup { font-size: 5px; line-height: 5px; }
.w34 { width: 34px; } .w22 { width: 22px; } .w17 { width: 17px; } .w68 { width: 68px; } .w36 { width: 36px; color: #4780c8; } .w18 { width: 18px; } .w111 { width: 111px; } .w71 { width: 71px; } .w70 { width: 70px; } .w21 { width: 21px; } .w47 { width: 47px; }
.clr { color: #bb6a72; }
.rsep { width: 1px; background: #dcdcdc; margin: -2px 5px 0 3px; height: 20px; }
.row + .row .rsep { margin-top: -6px; }
.fmt { justify-content: space-around; }
.fmt span, .fmt b, .fmt em, .fmt u, .fmt s { font-size: 8.500px; color: #444; }
.fmt .fx { color: #4780c8; font-weight: 700; }
.fmt .hl { border-bottom: 2px solid #f2e13c; line-height: 10px; height: 12px; }
.fmt .rd { border-bottom: 2px solid #d8362a; line-height: 10px; height: 12px; color: #222; }
.alignb { background: #dcdcdc; letter-spacing: 3px; font-size: 11px; }
.gallery { margin-left: 5px; width: 554px; height: 37px; margin-top: 7px; background: #fff; border: 1px solid #ececec; border-radius: 2px; display: flex; gap: 5.400px; padding-left: 13px; position: relative; flex: none; filter: blur(.25px); }
.sty { width: 43px; height: 36px; background: #f8f8f8; overflow: hidden; display: flex; flex-direction: column; align-items: center; justify-content: space-between; flex: none; color: #222; font-family: "Liberation Sans", sans-serif; }
.sty-on { width: 47px; border: 1px solid #b9c6d8; background: #eef2f6; border-radius: 2px; }
.w41 { width: 41px; }
.sty em { font-style: normal; font-size: 6px; line-height: 9px; padding-bottom: 2px; color: #444; white-space: nowrap; }
.sty > span { white-space: nowrap; }
.sm { font-size: 6.500px; line-height: 25px; }
.it { font-style: italic; color: #555; }
.h1s { font-size: 11.500px; line-height: 24px; }
.h2s { font-size: 10.500px; line-height: 24px; }
.tts { font-size: 18px; line-height: 24px; }
.sbs { font-size: 9.500px; line-height: 24px; color: #888; }
.pane { position: absolute; right: -28px; top: 22px; width: 26px; text-align: center; font-size: 7px; line-height: 8px; color: #555; }
.notice { position: absolute; left: 788px; top: 29px; width: 207px; height: 43px; background: #dde3ea; border-radius: 5px; display: flex; align-items: center; padding-left: 8px; color: #3d4650; filter: blur(.25px); box-shadow: 0 1px 2px rgba(0,0,0,.1); }
.notice svg { width: 17px; height: 16px; flex: none; }
.notice-txt { margin-left: 7px; display: flex; flex-direction: column; gap: 4px; font-size: 7.500px; white-space: nowrap; width: 133px; }
.notice-txt b { font-size: 8px; font-weight: 500; }
.notice-act { width: 42px; height: 43px; display: flex; flex-direction: column; border-left: 1px solid #cfd5dc; font-size: 8px; color: #777; text-align: center; }
.notice-act span { height: 21px; line-height: 22px; border-bottom: 1px solid #cfd5dc; }
.notice-act span:last-child { border-bottom: 0; }
.w-doc-area { flex: 1; min-height: 0; background: #f1f1f1; padding-left: 26px; overflow: hidden; position: relative; border-bottom: 1px solid #ddd; }
.page-prev { width: 972px; height: 17px; background: #fff; box-shadow: 0 1px 2px rgba(0,0,0,.18); }
.page-cur { width: 972px; margin-top: 23px; height: 600px; background: #fff; padding: 142px 0 0 124px; box-shadow: 0 0 2px rgba(0,0,0,.18); position: relative; }
.page-cur p { font: 400 21px/28.930px "Liberation Sans", Arial, sans-serif; color: #000; white-space: nowrap; transform: scaleX(.913); transform-origin: left; }
.sp { text-decoration: underline wavy #d8322a 1px; text-underline-offset: 2px; }
.ibeam { position: absolute; left: 469px; top: 301px; width: 7px; height: 12px; }
.w-vthumb { position: absolute; right: 3px; top: 222px; width: 3px; height: 12px; background: #bbb; border-radius: 2px; }
.w-hscroll { height: 12px; flex: none; background: #dedede; padding: 3px 0 0 2px; }
.w-hscroll span { display: block; width: 890px; height: 5px; background: #a8a8a8; border-radius: 3px; }
.w-status { height: 18px; flex: none; background: #cfcfcf; display: flex; align-items: center; gap: 14px; padding: 0 14px 0 13px; color: #6a6a6a; font-size: 8px; white-space: nowrap; }
.st-right { margin-left: auto; display: flex; align-items: center; gap: 11px; }
.st-view { background: #b5b5b5; padding: 2px 8px; }
.st-zoom { width: 58px; height: 2px; background: #777; display: block; position: relative; }
.st-zoom i { position: absolute; left: 38px; top: -3px; width: 4px; height: 8px; background: #aaa; border-radius: 2px; }
.scrim { position: absolute; left: 0; right: 0; bottom: 0; height: 281px; background: linear-gradient(to bottom, rgba(0,0,0,0) 0, rgba(0,0,0,.13) 37%, rgba(0,0,0,.27) 72%, rgba(0,0,0,.42) 89%, rgba(0,0,0,.62) 100%); pointer-events: none; }
.progress { position: absolute; left: 18px; right: 18px; top: 643px; height: 5px; background: #3a3a3a; }
.p-buf { position: absolute; left: 0; top: 0; height: 5px; width: 1826px; background: #888; }
.p-play { position: absolute; left: 0; top: 0; height: 5px; width: 1790px; background: #f00; }
.controls { position: absolute; left: 0; right: 0; top: 654px; height: 60px; display: flex; align-items: center; padding: 0 18px 0 21px; fill: #eee; }
.c-slot { display: flex; align-items: center; justify-content: center; position: relative; height: 60px; }
.s72 { width: 72px; } .s80 { width: 80px; } .s62 { width: 62px; }
.c-ic { width: 24px; height: 24px; }
.c-play { width: 24px; height: 30px; }
.c-vol { width: 28px; height: 28px; }
.c-time { margin-left: 5px; font-size: 19.600px; color: #eee; white-space: nowrap; }
.c-right { margin-left: auto; display: flex; }
.cc { width: 34px; height: 26px; background: #6e6e6e; border-radius: 4px; color: #000; font: 700 18px/26px "Liberation Mono", monospace; text-align: center; letter-spacing: -1px; }
.c-gear { width: 36px; height: 36px; }
.hd { position: absolute; left: 45px; top: 9px; width: 20px; height: 14px; background: #d50000; color: #fff; font: 700 11px/14px Roboto, sans-serif; text-align: center; border-radius: 1px; }
.c-ic2 { width: 36px; height: 30px; }
.c-th { width: 30px; height: 20px; }
.c-fs { width: 30px; height: 30px; }

/* below video */
.below { flex: 1; min-height: 0; position: relative; background: #f9f9f9; display: flex; padding: 32px 0 0 216px; }
.info { width: 861px; flex: none; }
.title { font: 400 27px/36px Roboto, sans-serif; color: #030303; white-space: nowrap; }
.meta { display: flex; align-items: center; margin-top: 19px; height: 30px; }
.views { width: 247px; font-size: 20.500px; color: #606060; white-space: nowrap; flex: none; }
.acts { display: flex; align-items: center; font-size: 22px; font-weight: 500; color: #030303; }
.act { display: flex; align-items: center; gap: 14px; white-space: nowrap; }
.act svg { width: 28px; height: 28px; fill: none; stroke: #030303; stroke-width: 1.700; flex: none; }
.a-like { width: 104px; }
.a-dis { width: 156px; gap: 11px; }
.a-share { width: 141px; gap: 9px; }
.a-save { width: 140px; gap: 14px; }
.a-save svg { height: 22px; }
.a-more { font-size: 15px; letter-spacing: 2px; margin-top: 6px; }
.playlist { width: 603px; height: 200px; background: #fff; border: 1px solid #e5e5e5; display: flex; padding: 17px 0 0 25px; margin-top: 4px; flex: none; position: relative; }
.pl-title { font-size: 21px; font-weight: 500; line-height: 34px; white-space: nowrap; }
.pl-sub { font-size: 18px; line-height: 30px; white-space: nowrap; color: #030303; }
.pl-sub span { color: #606060; }
.pl-chev { position: absolute; left: 552px; top: 43px; width: 20px; height: 12px; fill: none; stroke: #030303; stroke-width: 1.600; }

/* taskbar */
.taskbar { height: 60px; flex: none; display: flex; align-items: stretch; background: linear-gradient(90deg, #29363d 0, #29363d 60%, #37332f 74%, #2b353a 84%, #24323a 100%); position: relative; }
.tb-sys { width: 291px; padding-left: 0; display: flex; flex: none; }
.ts { width: 72px; display: flex; align-items: center; justify-content: center; height: 60px; }
.t-win { width: 24px; height: 24px; }
.t-ln { width: 26px; height: 26px; fill: none; stroke: #fff; stroke-width: 1.300; }
.tb-apps { display: flex; flex: none; }
.ta { width: 75px; height: 60px; display: flex; align-items: center; justify-content: center; position: relative; }
.ta-on { background: #4d5a61; width: 73px; margin: 0 1px; }
.t-app { width: 36px; height: 40px; }
.run { position: absolute; left: 7px; right: 7px; bottom: 0; height: 3px; background: #6aacde; }
.run-on { left: 0; right: 0; }
.t-badge { position: absolute; left: 36px; top: 26px; width: 24px; height: 28px; border-radius: 50%; background: #33691e; color: #9fc38d; font-size: 13px; line-height: 28px; text-align: center; }
.t-badge-pic { left: 40px; top: 24px; background: linear-gradient(135deg, #9a7fb8, #3a2f6b 50%, #d8a7c8); }
.tray { position: absolute; left: 0; right: 0; top: 0; height: 60px; display: flex; align-items: center; padding-left: 1317px; color: #eee; pointer-events: none; }
.sun { width: 29px; height: 29px; border-radius: 50%; background: linear-gradient(135deg, #ffe680, #ff9f00); flex: none; }
.weather { margin-left: 16px; font-size: 21px; width: 118px; white-space: nowrap; }
.tr { flex: none; fill: none; stroke: #eee; stroke-width: 1.200; }
.tr-up { width: 20px; height: 12px; margin: 0 0 4px 21px; }
.tr-meet { width: 20px; height: 26px; margin-left: 16px; }
.tr-bat { width: 28px; height: 20px; margin-left: 12px; }
.tr-wifi { width: 26px; height: 24px; margin-left: 11px; }
.tr-vol { width: 24px; height: 24px; margin-left: 8px; }
.eng { margin-left: 16px; font-size: 18px; width: 46px; }
.clock { display: flex; flex-direction: column; align-items: center; width: 100px; margin-left: 4px; font-size: 18.700px; line-height: 28px; white-space: nowrap; }
.note { position: relative; margin-left: 26px; width: 26px; height: 26px; margin-top: -12px; }
.note svg { width: 26px; height: 26px; display: block; }
.note-n { position: absolute; left: -1px; top: 18px; width: 26px; height: 26px; border-radius: 50%; background: #2d3a40; border: 1px solid #888; color: #fff; font-size: 19px; font-weight: 400; line-height: 24px; text-align: center; }
```
